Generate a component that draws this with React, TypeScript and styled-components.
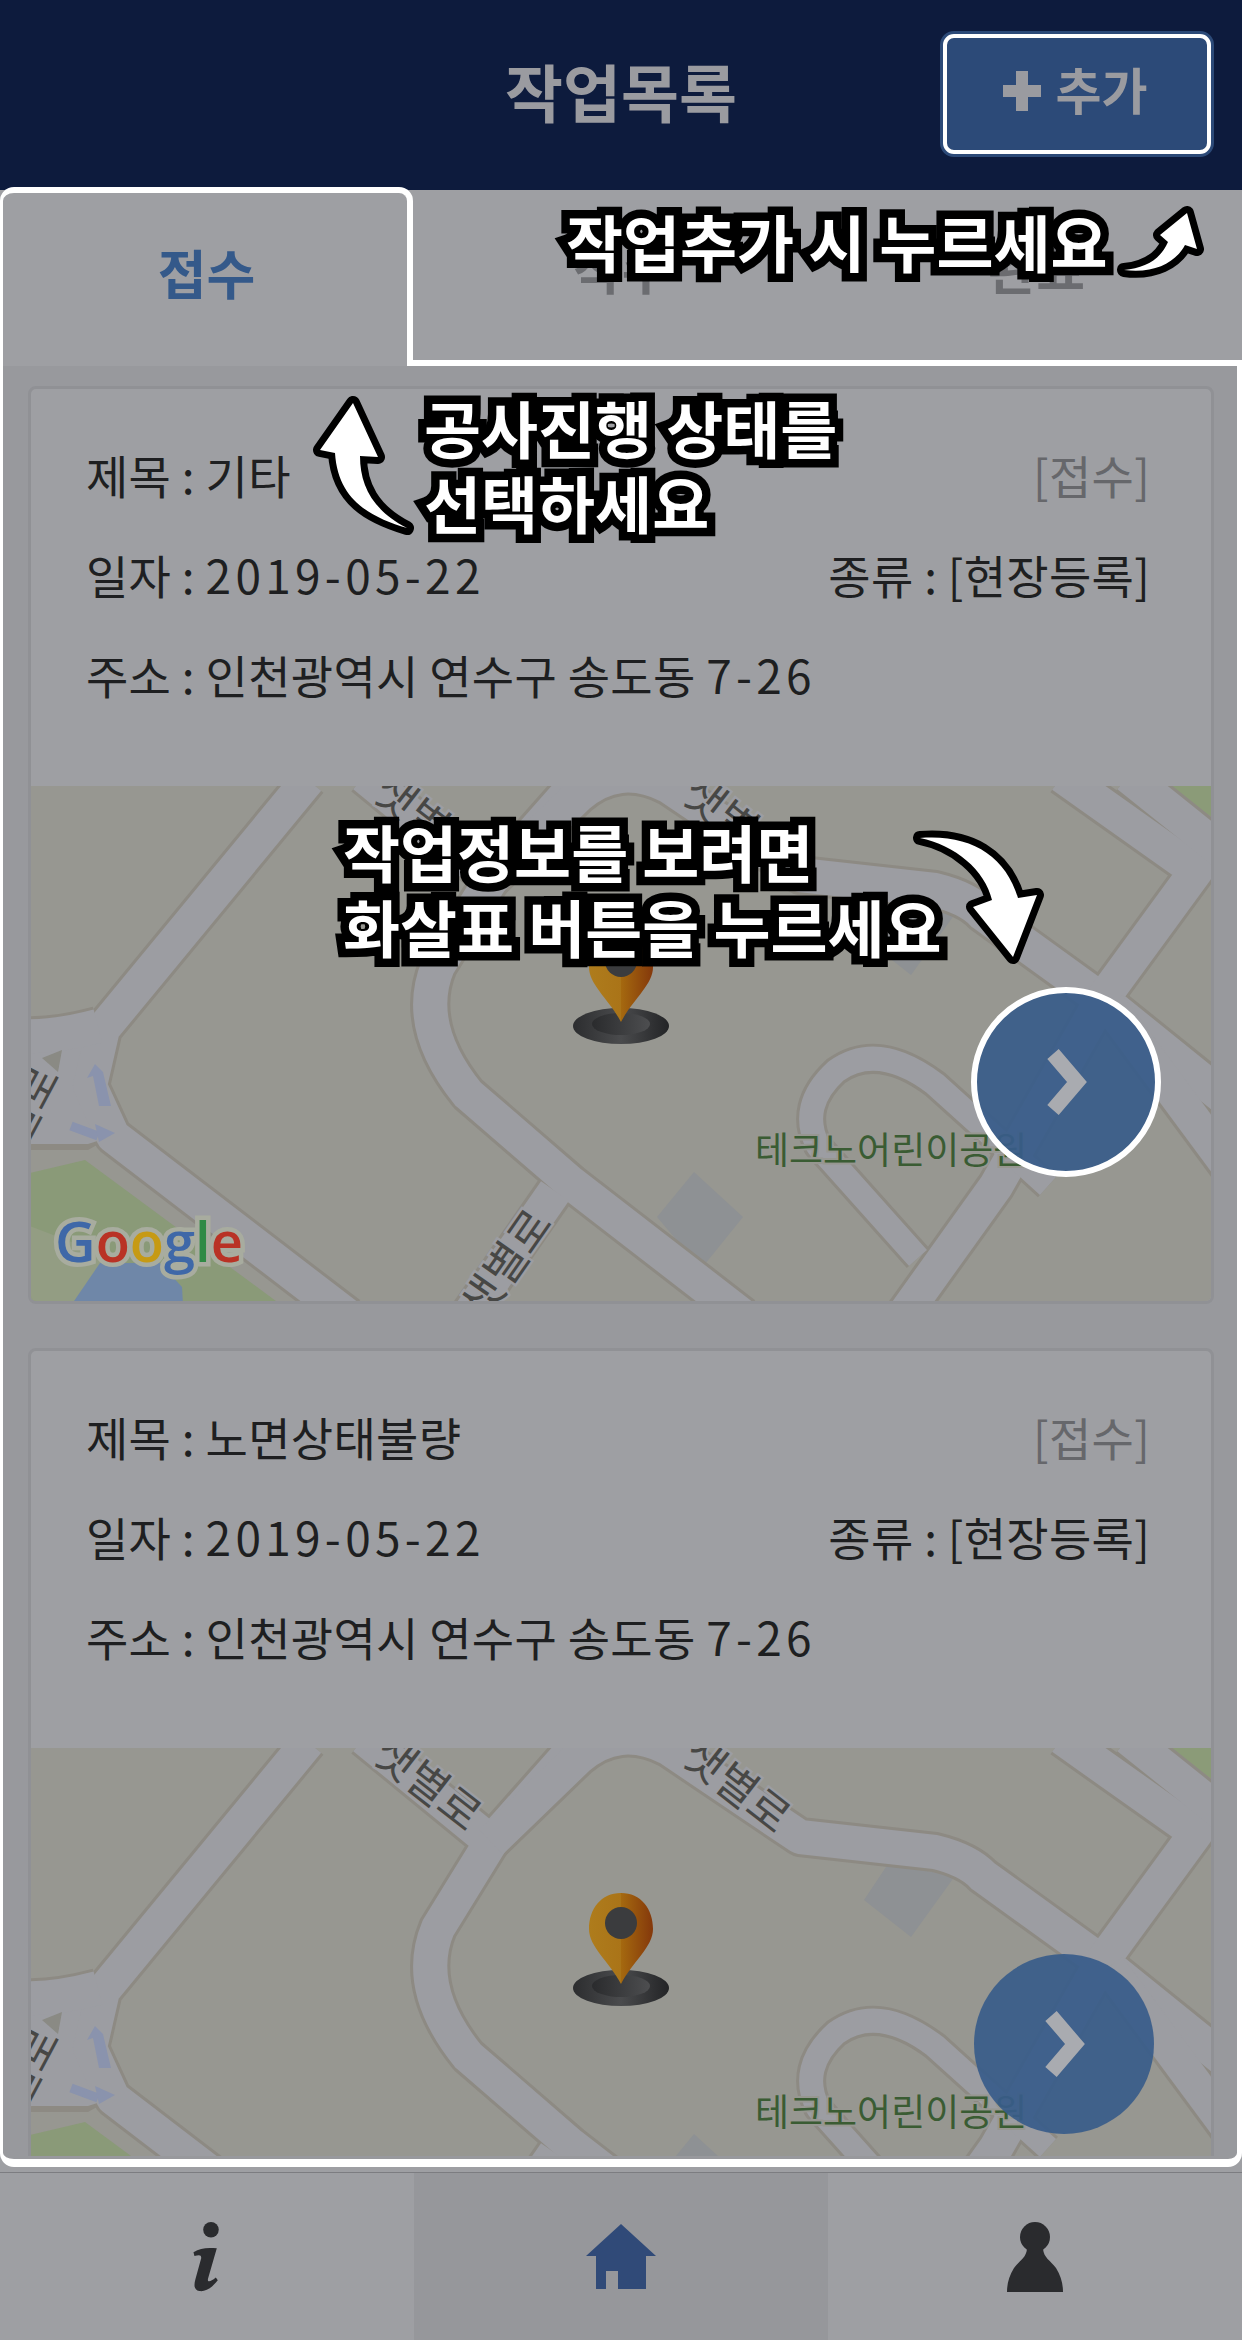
import React from 'react'
import styled, { createGlobalStyle } from 'styled-components'

const FONT = `"Noto Sans CJK KR", "Noto Sans", "Liberation Sans", sans-serif`

const GlobalStyle = createGlobalStyle`
  html, body {
    margin: 0;
    padding: 0;
    background: #9e9fa3;
    font-family: ${FONT};
  }
`

const roads = [
  'M280 -6 L75 243 L62 300 L85 350 L320 530',
  'M-10 250 Q25 252 70 240',
  'M555 -10 L463 94 L410 180 Q385 240 440 308 L543 397 L715 530',
  'M336 -10 L463 94',
  'M527 405 L440 530',
  'M463 94 L550 10 Q590 -25 640 0 L772 89 L907 104 Q940 112 955 128 L1081 219 L1200 315',
  'M1034 -10 L1168 85 L1073 215 L968 400 L875 530',
  'M1100 -10 L1200 70',
  'M1081 219 L1200 380',
]

const lanes = ['M1020 400 L907 298 Q850 255 808 285 Q770 320 790 360 L890 472']

const MapArt: React.FC = () => (
  <MapSvg viewBox="0 0 1186 518">
    <defs>
      <linearGradient id="pinBody" x1="0" x2="1" y1="0" y2="0">
        <stop offset="0" stopColor="#ae7c1c" />
        <stop offset="0.5" stopColor="#aa7418" />
        <stop offset="0.5" stopColor="#a5690f" />
        <stop offset="1" stopColor="#84380b" />
      </linearGradient>
      <linearGradient id="pinBase" x1="0" x2="1" y1="0" y2="0">
        <stop offset="0" stopColor="#2c2d2f" />
        <stop offset="0.5" stopColor="#4a4b4d" />
        <stop offset="1" stopColor="#232426" />
      </linearGradient>
      <linearGradient id="pinHole" x1="0" x2="1" y1="0" y2="0">
        <stop offset="0" stopColor="#2a2b2d" />
        <stop offset="1" stopColor="#4d4e50" />
      </linearGradient>
    </defs>
    <rect width="1186" height="518" fill="#979791" />
    <polygon points="1129,0 1186,0 1186,32" fill="#8b9b78" />
    <polygon points="2,387 57,374 252,518 2,518" fill="#8a9a78" />
    <polygon points="2,440 80,470 60,518 2,518" fill="#939d83" />
    <polygon points="72,477 132,477 154,501 155,518 44,518" fill="#6f87a8" />
    <polygon points="666,386 715,431 673,483 629,431" fill="#8e9194" />
    <polygon points="836,152 860,116 927,128 883,189" fill="#8e9194" />
    <g fill="none" stroke="#8d8a83" strokeWidth="40" strokeLinejoin="round">
      {roads.map((d) => (
        <path key={d} d={d} />
      ))}
    </g>
    <g fill="none" stroke="#8d8a83" strokeWidth="30" strokeLinejoin="round">
      {lanes.map((d) => (
        <path key={d} d={d} />
      ))}
    </g>
    <polygon points="0,250 75,243 62,300 85,350 60,364 0,364" fill="#8d8a83" />
    <polygon points="0,254 75,246 62,300 85,350 60,358 0,358" fill="#9c9da2" />
    <g fill="none" stroke="#9c9da2" strokeWidth="34" strokeLinejoin="round">
      {roads.map((d) => (
        <path key={d} d={d} />
      ))}
    </g>
    <g fill="none" stroke="#9c9da2" strokeWidth="24" strokeLinejoin="round">
      {lanes.map((d) => (
        <path key={d} d={d} />
      ))}
    </g>
    <polygon points="14,272 34,264 30,286" fill="#8a8a84" />
    <polygon points="67,278 59,292 65,290 71,320 83,320 75,286" fill="#8a93ad" />
    <polyline points="43,340 70,350" fill="none" stroke="#8a93ad" strokeWidth="9" />
    <polygon points="67,338 87,347 71,356" fill="#8a93ad" />
    <MapLabel transform="translate(390 48) rotate(38)" textAnchor="middle">샛별로</MapLabel>
    <MapLabel transform="translate(699 50) rotate(38)" textAnchor="middle">샛별로</MapLabel>
    <MapLabel transform="translate(491 487) rotate(-55)" textAnchor="middle">샛별로</MapLabel>
    <MapLabel transform="translate(14 326) rotate(-62)" textAnchor="middle">길로</MapLabel>
    <ParkLabel x="727" y="378">테크노어린이공원</ParkLabel>
    <GoogleMark x="27" y="476">
      <tspan fill="#3f68a8">G</tspan>
      <tspan fill="#b93225">o</tspan>
      <tspan fill="#c69a14">o</tspan>
      <tspan fill="#3f68a8">g</tspan>
      <tspan fill="#2f8a45">l</tspan>
      <tspan fill="#b93225">e</tspan>
    </GoogleMark>
    <ellipse cx="593" cy="240" rx="48" ry="18" fill="url(#pinBase)" />
    <ellipse cx="593" cy="238" rx="29" ry="11" fill="url(#pinHole)" />
    <path
      d="M593 145 C613 145 625 161 625 181 C625 199 605 213 593 236 C581 213 561 199 561 181 C561 161 573 145 593 145 Z"
      fill="url(#pinBody)"
    />
    <ellipse cx="593" cy="175" rx="16" ry="16" fill="#3b3c3e" />
  </MapSvg>
)

const ChevronIcon: React.FC = () => (
  <svg width="44" height="66" viewBox="0 0 44 66">
    <polyline points="7,5 31,33 7,61" fill="none" stroke="#a9abb0" strokeWidth="15" />
  </svg>
)

const WorkCard: React.FC<{ title: string; highlight?: boolean }> = ({ title, highlight }) => (
  <Card>
    <Info>
      <Row>
        <span>제목 : {title}</span>
        <Status>[접수]</Status>
      </Row>
      <Row>
        <span>
          일자 : <Digits>2019-05-22</Digits>
        </span>
        <span>종류 : [현장등록]</span>
      </Row>
      <Row>
        <span>
          주소 : 인천광역시 연수구 송도동 <Digits>7-26</Digits>
        </span>
      </Row>
    </Info>
    <MapBox>
      <MapArt />
      <GoButton $highlight={highlight}>
        <ChevronIcon />
      </GoButton>
    </MapBox>
  </Card>
)

const App: React.FC = () => {
  return (
    <Page>
      <GlobalStyle />
      <Header>
        <Title>작업목록</Title>
        <AddButton>
          <svg width="38" height="40" viewBox="0 0 38 40">
            <path d="M13 0 H25 V14 H38 V26 H25 V40 H13 V26 H0 V14 H13 Z" fill="#9a9ba0" />
          </svg>
          <AddLabel>추가</AddLabel>
        </AddButton>
      </Header>
      <Tabs>
        <Tab $active>접수</Tab>
        <Tab>착수</Tab>
        <Tab>완료</Tab>
      </Tabs>
      <Content>
        <Scroller>
          <WorkCard title="기타" highlight />
          <WorkCard title="노면상태불량" />
        </Scroller>
      </Content>
      <BottomNav>
        <NavItem>
          <InfoIcon width="40" height="70" viewBox="0 0 40 72">
            <circle cx="21" cy="8" r="8" fill="#2a2b2e" />
            <path
              d="M3 31 C10 27 16 26 27 27 L18 58 C17 62 20 62 26 57 L28 60 C22 68 15 72 9 71 C4 70 3 66 5 59 L11 37 C11 33 8 34 4 35 Z"
              fill="#2a2b2e"
            />
          </InfoIcon>
        </NavItem>
        <NavItem $active>
          <svg width="72" height="66" viewBox="0 0 72 66">
            <path d="M36 0 L71 32 H61 V65 H33 V47 H21 V65 H11 V32 H1 Z" fill="#304a78" />
          </svg>
        </NavItem>
        <NavItem>
          <svg width="58" height="70" viewBox="0 0 58 70">
            <ellipse cx="29" cy="15" rx="15" ry="15" fill="#2a2b2e" />
            <path d="M21 27 H37 C38 36 44 38 50 46 C55 54 57 62 57 70 H1 C1 62 3 54 8 46 C14 38 20 36 21 27 Z" fill="#2a2b2e" />
          </svg>
        </NavItem>
      </BottomNav>

      <Note $top={204} $left={566}>작업추가 시 누르세요</Note>
      <ArrowSvg $top={190} $left={1100} width="142" height="110" viewBox="0 0 142 110">
        <path d="M87 23 L97 59 L85 55 C76 72 55 84 24 80 C45 78 60 70 68 52 L60 45 Z" />
      </ArrowSvg>
      <Note $top={390} $left={424}>
        공사진행 상태를
        <br />
        선택하세요
      </Note>
      <ArrowSvg $top={385} $left={300} width="120" height="160" viewBox="0 0 120 160">
        <path d="M53 18 L78 72 L60 71 C60 100 72 125 107 143 C70 132 38 115 35 68 L20 65 Z" />
      </ArrowSvg>
      <Note $top={814} $left={343}>
        작업정보를 보려면
        <br />
        화살표 버튼을 누르세요
      </Note>
      <ArrowSvg $top={820} $left={900} width="160" height="160" viewBox="0 0 160 160">
        <path d="M20 18 C70 14 105 35 118 78 L137 75 L113 137 L73 87 L92 80 C85 50 55 25 20 18 Z" />
      </ArrowSvg>
    </Page>
  )
}

const Page = styled.div`
  position: relative;
  width: 1242px;
  height: 2340px;
  display: flex;
  flex-direction: column;
  overflow: hidden;
  background: #9e9fa3;
  color: #1e1f21;
`

const Header = styled.header`
  height: 190px;
  flex: none;
  box-sizing: border-box;
  display: grid;
  grid-template-columns: 1fr auto 1fr;
  align-items: center;
  padding: 0 30px 2px 30px;
  background: #0d1b3d;
`

const Title = styled.h1`
  grid-column: 2;
  margin: 0 0 10px;
  font-size: 63px;
  font-weight: 700;
  line-height: 1;
  color: #9a9ba0;
`

const AddButton = styled.button`
  grid-column: 3;
  justify-self: end;
  width: 270px;
  height: 122px;
  box-sizing: border-box;
  display: flex;
  align-items: center;
  justify-content: center;
  gap: 15px;
  padding: 0 4px 6px 0;
  border: 5px solid #fff;
  border-radius: 12px;
  outline: 3px solid #2c4a78;
  outline-offset: -1px;
  background: #2c4a78;
  color: #9a9ba0;
  font-family: ${FONT};
  font-size: 50px;
  font-weight: 700;
`

const AddLabel = styled.span`
  position: relative;
  top: -3px;
`

const Tabs = styled.div`
  height: 176px;
  flex: none;
  display: flex;
`

const Tab = styled.div<{ $active?: boolean }>`
  box-sizing: border-box;
  flex: ${(p) => (p.$active ? '0 0 413px' : '1 1 0')};
  display: flex;
  align-items: center;
  justify-content: center;
  padding: 0 0 16px 3px;
  font-size: 53px;
  font-weight: 700;
  color: ${(p) => (p.$active ? '#34598a' : '#6b6c70')};
  background: #9e9fa3;
  border-bottom: ${(p) => (p.$active ? 'none' : '6px solid #fff')};
  ${(p) =>
    p.$active &&
    `
    margin-top: -3px;
    border-top: 6px solid #fff;
    border-left: 3px solid #fff;
    border-right: 6px solid #fff;
    border-radius: 14px 14px 0 0;
  `}
`

const Content = styled.main`
  flex: 1;
  min-height: 0;
  display: flex;
  flex-direction: column;
  margin-bottom: 5px;
  box-sizing: border-box;
  background: #98999d;
  border: solid #fff;
  border-width: 0 5px 8px 3px;
  border-radius: 0 0 14px 14px;
`

const Scroller = styled.div`
  flex: 1;
  min-height: 0;
  overflow: hidden;
  display: flex;
  flex-direction: column;
  gap: 44px;
  margin-bottom: 3px;
  padding: 20px 23px 0 25px;
`

const Card = styled.article`
  flex: none;
  box-sizing: border-box;
  border: 3px solid #909195;
  border-radius: 8px;
  overflow: hidden;
  background: #9e9fa3;
`

const Info = styled.div`
  height: 397px;
  box-sizing: border-box;
  padding: 35px 61px 0 55px;
`

const Row = styled.div`
  height: 100px;
  display: flex;
  align-items: center;
  justify-content: space-between;
  font-size: 46px;
  line-height: 1;
  letter-spacing: 0.3px;
`

const Digits = styled.span`
  letter-spacing: 4.3px;
`

const Status = styled.span`
  color: #66676b;
`

const MapBox = styled.div`
  position: relative;
  height: 515px;
  overflow: hidden;
`

const MapSvg = styled.svg`
  display: block;
  width: 1186px;
  height: 518px;
  margin-left: -3px;
`

const MapLabel = styled.text`
  font-family: ${FONT};
  font-size: 44px;
  fill: #474745;
  stroke: #9c9da2;
  stroke-width: 5px;
  paint-order: stroke;
`

const ParkLabel = styled.text`
  font-family: ${FONT};
  font-size: 37px;
  fill: #3a5c33;
  stroke: #979791;
  stroke-width: 4px;
  paint-order: stroke;
`

const GoogleMark = styled.text`
  font-family: 'Open Sans', 'Liberation Sans', sans-serif;
  font-size: 56px;
  font-weight: 600;
  stroke: #a8ac9f;
  stroke-width: 9px;
  paint-order: stroke;
`

const GoButton = styled.div<{ $highlight?: boolean }>`
  position: absolute;
  top: ${(p) => (p.$highlight ? 201 : 206)}px;
  right: ${(p) => (p.$highlight ? 50 : 57)}px;
  width: ${(p) => (p.$highlight ? 190 : 180)}px;
  height: ${(p) => (p.$highlight ? 190 : 180)}px;
  box-sizing: border-box;
  display: flex;
  align-items: center;
  justify-content: center;
  padding-left: 4px;
  border-radius: 50%;
  background: rgba(56, 92, 138, 0.92);
  border: ${(p) => (p.$highlight ? '6px solid #fff' : 'none')};
`

const BottomNav = styled.nav`
  height: 168px;
  flex: none;
  box-sizing: border-box;
  display: grid;
  grid-template-columns: 414px 414px 414px;
  border-top: 1px solid #7c7d81;
`

const NavItem = styled.div<{ $active?: boolean }>`
  display: flex;
  align-items: center;
  justify-content: center;
  background: ${(p) => (p.$active ? '#96979b' : '#9e9fa3')};
`

const InfoIcon = styled.svg`
  margin-left: 6px;
`

const Note = styled.div<{ $top: number; $left: number }>`
  position: absolute;
  top: ${(p) => p.$top}px;
  left: ${(p) => p.$left}px;
  font-size: 62px;
  font-weight: 700;
  line-height: 75px;
  white-space: nowrap;
  color: #fff;
  -webkit-text-stroke: 17px #000;
  paint-order: stroke fill;
`

const ArrowSvg = styled.svg<{ $top: number; $left: number }>`
  position: absolute;
  top: ${(p) => p.$top}px;
  left: ${(p) => p.$left}px;
  fill: #fff;
  stroke: #000;
  stroke-width: 14px;
  stroke-linejoin: round;
  paint-order: stroke;
  overflow: visible;
`

export default App
